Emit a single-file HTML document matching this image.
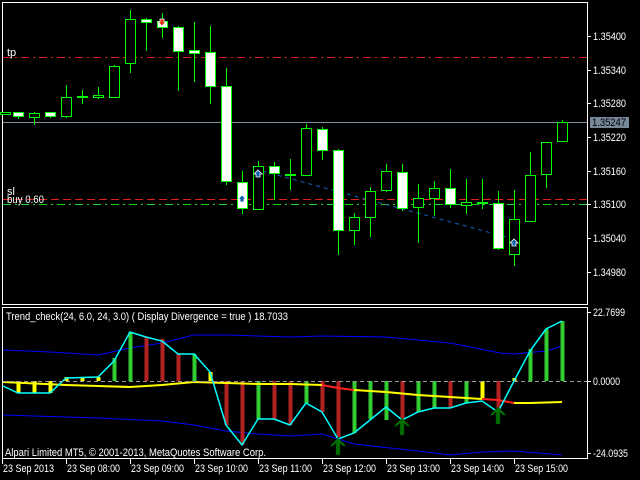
<!DOCTYPE html>
<html><head><meta charset="utf-8"><style>
body{margin:0;background:#000;width:640px;height:480px;overflow:hidden}
svg{display:block}
text{font-family:"Liberation Sans",sans-serif;font-size:11px;fill:#fff}
</style></head><body>
<svg id="s" width="640" height="480" viewBox="0 0 640 480" xmlns="http://www.w3.org/2000/svg">
<rect width="640" height="480" fill="#000"/>
<rect x="2.5" y="2.5" width="585" height="302" fill="none" stroke="#fff"/>
<rect x="2.5" y="307.5" width="585" height="151" fill="none" stroke="#fff"/>
<line x1="3" y1="57.5" x2="587" y2="57.5" stroke="#e0201c" stroke-dasharray="8,4,2,4"/>
<line x1="3" y1="122.5" x2="587" y2="122.5" stroke="#8090a0"/>
<line x1="3" y1="199.5" x2="587" y2="199.5" stroke="#e0201c" stroke-dasharray="8,4"/>
<line x1="3" y1="204.5" x2="587" y2="204.5" stroke="#20d020" stroke-dasharray="8,4,2,4"/>
<line x1="262" y1="171" x2="510" y2="238" stroke="#1060c0" stroke-dasharray="4,4"/>
<text x="7" y="56" font-size="10">tp</text>
<text x="7" y="195" font-size="10">sl</text>
<text x="7" y="203" font-size="10" textLength="37" lengthAdjust="spacingAndGlyphs">buy 0.60</text>
<g id="c"></g>
<g id="ind"></g>
<line x1="3" y1="381.5" x2="587" y2="381.5" stroke="#999" stroke-dasharray="4,3"/>
<text x="6" y="320" textLength="282" lengthAdjust="spacingAndGlyphs">Trend_check(24, 6.0, 24, 3.0) ( Display Divergence = true ) 18.7033</text>
<text x="5" y="456" textLength="261" lengthAdjust="spacingAndGlyphs">Alpari Limited MT5, © 2001-2013, MetaQuotes Software Corp.</text>
<g id="ax"></g>
<rect x="590" y="117" width="39" height="11" fill="#778899"/>
<text x="592" y="126" style="fill:#000" textLength="34" lengthAdjust="spacingAndGlyphs">1.35247</text>
</svg>
<script>
var NS="http://www.w3.org/2000/svg";
function el(p,t,a){var e=document.createElementNS(NS,t);for(var k in a)e.setAttribute(k,a[k]);p.appendChild(e);return e}
var c=document.getElementById('c');
var C=[[5,112,114,112,114,0],[18,112,116,112,119,1],[34,113,117,112,125,0],[50,112,116,112,118,1],[66,97,116,85,118,0],[82,96,97,90,104,2],[98,95,97,87,99,0],[114,66,97,65,97,0],[130,19,63,10,73,0],[146,19,22,18,51,1],[162,21,27,13,38,1],[178,27,51,26,91,1],[194,50,53,22,82,1],[210,52,86,26,104,1],[226,86,181,68,185,1],[242,182,208,171,214,1],[258,166,209,161,210,0],[274,166,173,162,200,1],[290,174,176,159,190,2],[306,128,175,124,176,0],[322,129,150,127,160,1],[338,150,230,149,255,1],[354,217,230,213,245,0],[370,191,217,187,237,0],[386,171,190,164,192,0],[402,172,208,164,211,1],[418,198,207,184,243,0],[434,188,198,181,216,0],[450,188,204,169,208,1],[466,202,205,179,214,0],[482,202,203,179,209,2],[498,203,248,191,250,1],[514,219,254,190,266,0],[530,175,221,152,221,0],[546,142,174,142,188,0],[562,122,141,120,141,0]];
C.forEach(function(d){var x=d[0];
el(c,'line',{x1:x+.5,y1:d[3],x2:x+.5,y2:d[4],stroke:'#00ff00'});
if(d[5]==2){el(c,'rect',{x:x-5,y:d[1],width:11,height:2,fill:'#00ff00'});return}
el(c,'rect',{x:x-4.5,y:d[1]+.5,width:10,height:d[2]-d[1],fill:d[5]?'#fff':'#000',stroke:'#00ff00'});});
function arr(x,y,col,down){var s=down?-1:1;el(c,'path',{d:'M'+x+' '+(y-4*s)+' l4 '+4*s+' h-2 v'+3*s+' h-4 v'+(-3*s)+' h-2z',fill:col,stroke:'#fff','stroke-width':0.8})}
arr(162,22,'#e03010',1);arr(242,199,'#1060b0');arr(258,174,'#1060b0');arr(514,243,'#1060b0');
var g=document.getElementById('ind');
function pl(pts,col,w){el(g,'polyline',{points:pts.map(function(p){return p.join(',')}).join(' '),fill:'none',stroke:col,'stroke-width':w})}
pl([[3,350],[50,352],[98,355],[130,348],[162,343],[194,335],[226,335],[258,336],[290,337],[322,336],[386,337],[450,343],[500,353],[514,354],[546,351],[562,346]],'#0000ff',1);
pl([[3,415],[98,418],[162,421],[194,425],[226,431],[258,434],[290,436],[322,434],[354,444],[418,451],[450,455],[482,452],[514,451],[562,455]],'#0000ff',1);
var H=[[18,393,'y'],[34,393,'y'],[50,393,'y'],[66,377,'y'],[82,377,'y'],[98,377,'y'],[114,358,'g'],[130,332,'g'],[146,337,'r'],[162,339,'r'],[178,354,'r'],[194,354,'g'],[210,372,'y'],[226,425,'r'],[242,445,'r'],[258,419,'g'],[274,419,'r'],[290,425,'r'],[306,403,'g'],[322,412,'r'],[338,437,'r'],[354,433,'g'],[370,419,'g'],[386,420,'g'],[402,420,'r'],[418,412,'g'],[434,408,'g'],[450,408,'r'],[466,403,'g'],[482,398,'y'],[498,410,'r'],[514,378,'y'],[530,349,'g'],[546,329,'g'],[562,321,'g']];
var col={y:'#ffff00',g:'#32cd32',r:'#b22222'};
H.forEach(function(h){var a=Math.min(h[1],381),b=Math.max(h[1],381);el(g,'rect',{x:h[0]-1.5,y:a,width:4,height:b-a,fill:col[h[2]]})});
pl([[3,382],[66,385],[98,386],[130,387],[162,385],[194,382],[226,383],[258,384],[290,384],[322,385]],'#ffff00',2);
pl([[322,385],[338,388],[354,390]],'#ff2020',2);
pl([[354,390],[386,392],[418,395],[450,397],[482,399]],'#ffff00',2);
pl([[482,399],[498,400],[514,403]],'#ff2020',2);
pl([[514,403],[530,403],[562,402]],'#ffff00',2);
pl([[3,386],[18,393],[50,393],[66,378],[98,377],[114,361],[130,332],[146,337],[162,341],[178,354],[194,354],[210,372],[226,425],[242,445],[258,419],[274,419],[290,425],[306,403],[322,412],[338,439],[354,433],[370,420],[386,407],[402,420],[418,412],[434,408],[450,408],[466,403],[482,401],[498,412],[514,381],[530,351],[546,329],[562,321]],'#00ffff',1.5);
function up(x,y){el(g,'path',{d:'M'+x+' '+y+' l8 8 h-3 l-3 -3 v12 h-4 v-12 l-3 3 h-3z',fill:'#007000',stroke:'#004000','stroke-width':0.5})}
up(338,438);up(402,418);up(498,407);
var ax=document.getElementById('ax');
var P=[['1.35400',36],['1.35340',70],['1.35280',103],['1.35220',137],['1.35160',171],['1.35100',204],['1.35040',238],['1.34980',272]];
P.forEach(function(p){el(ax,'line',{x1:587,y1:p[1]+.5,x2:591,y2:p[1]+.5,stroke:'#fff'});var t=el(ax,'text',{x:593,y:p[1]+4,textLength:33,lengthAdjust:'spacingAndGlyphs'});t.textContent=p[0]});
[['22.7699',312,593,32],['0.0000',381,593,27],['-24.0935',453,593,35]].forEach(function(p){el(ax,'line',{x1:587,y1:p[1]+.5,x2:591,y2:p[1]+.5,stroke:'#fff'});var t=el(ax,'text',{x:p[2],y:p[1]+4,textLength:p[3],lengthAdjust:'spacingAndGlyphs'});t.textContent=p[0]});
['23 Sep 2013','23 Sep 08:00','23 Sep 09:00','23 Sep 10:00','23 Sep 11:00','23 Sep 12:00','23 Sep 13:00','23 Sep 14:00','23 Sep 15:00'].forEach(function(s,i){var x=2+64*i;el(ax,'line',{x1:x+.5,y1:459,x2:x+.5,y2:464,stroke:'#fff'});var t=el(ax,'text',{x:x+1,y:472,textLength:i?53:51,lengthAdjust:'spacingAndGlyphs'});t.textContent=s});
</script>
</body></html>
